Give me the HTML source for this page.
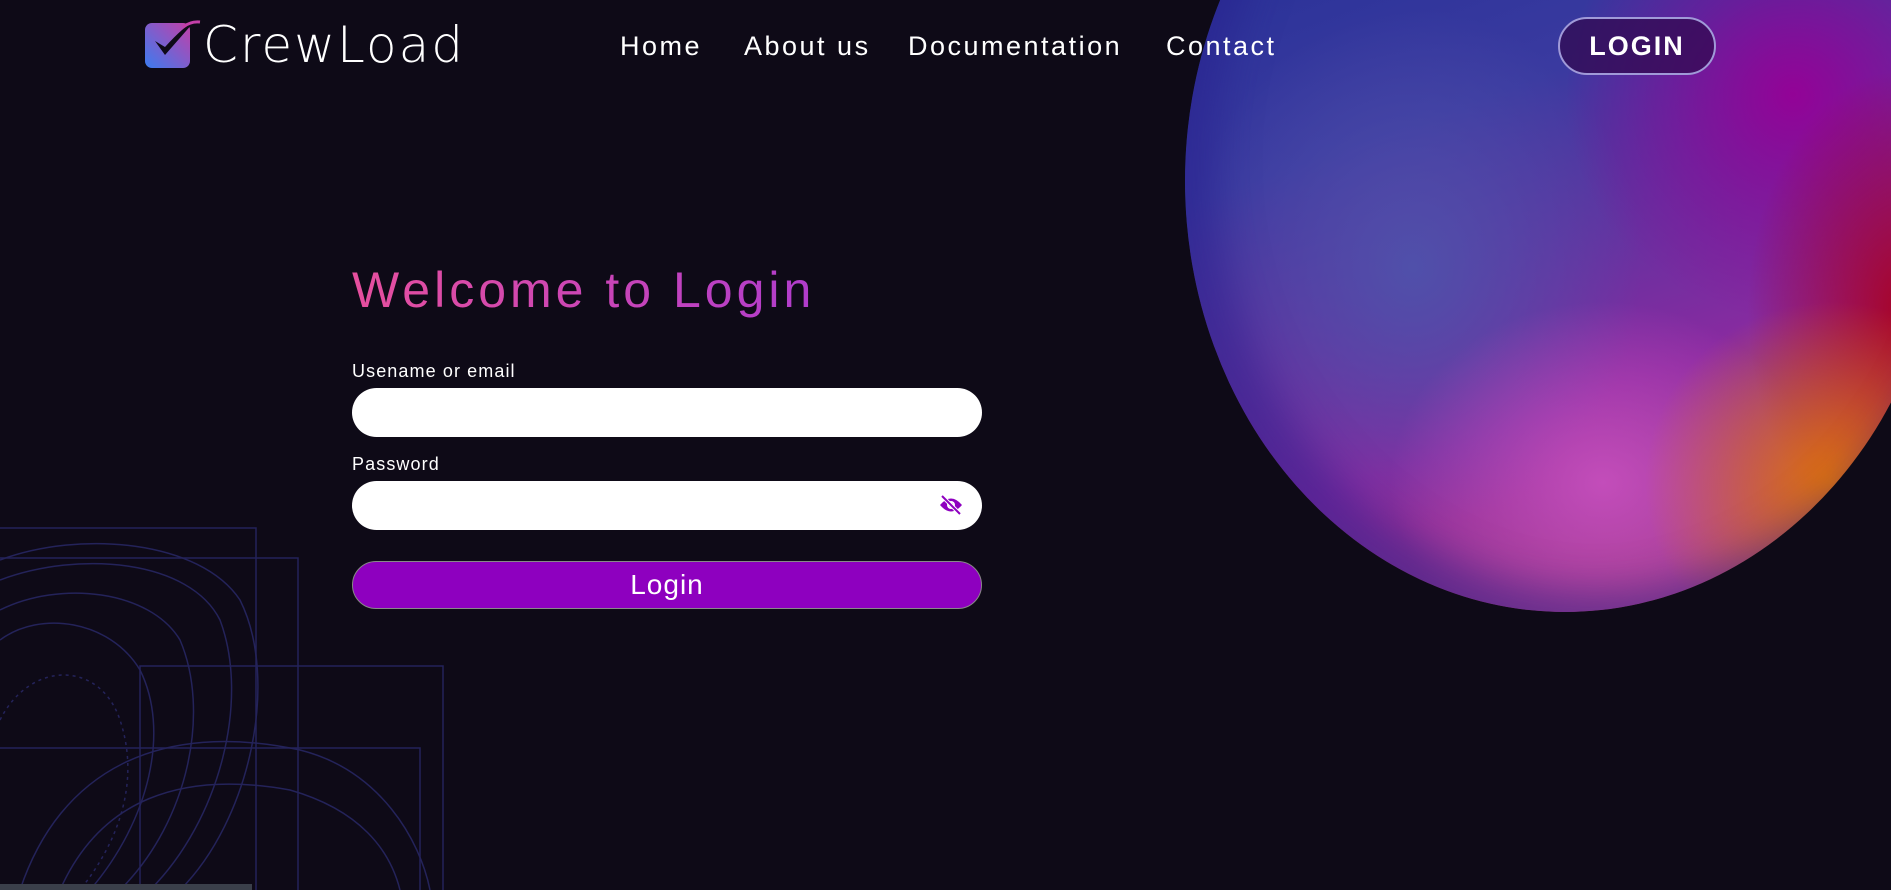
<!DOCTYPE html>
<html><head><meta charset="utf-8"><style>
*{margin:0;padding:0;box-sizing:border-box}
html,body{width:1891px;height:890px;overflow:hidden}
body{background:#0e0a17;position:relative;font-family:"Liberation Sans",sans-serif;color:#fff}
.sphere{position:absolute;left:1185px;top:-250px;width:760px;height:862px;border-radius:50%;overflow:hidden;
background:
radial-gradient(ellipse 35% 30% at 85% 85%,rgba(230,120,0,.9),rgba(230,120,0,0) 70%),
radial-gradient(ellipse 30% 40% at 95% 65%,rgba(170,0,30,.95),rgba(170,0,30,0) 70%),
radial-gradient(ellipse 40% 30% at 55% 85%,rgba(200,80,190,.9),rgba(200,80,190,0) 70%),
radial-gradient(ellipse 40% 35% at 80% 40%,rgba(150,0,150,.95),rgba(150,0,150,0) 75%),
radial-gradient(ellipse 40% 40% at 30% 60%,rgba(80,80,170,1),rgba(80,80,170,0) 75%),
linear-gradient(160deg,#1a2a90 0%,#3a3aa0 40%,#8a2aa0 70%,#b04a70 100%)}
.sphere::after{content:"";position:absolute;inset:0;border-radius:50%;box-shadow:inset 30px -20px 40px rgba(40,30,140,.5)}
.logo{position:absolute;left:145px;top:23px;width:45px;height:45px;border-radius:7px;background:linear-gradient(45deg,#3b7cf0,#c33fa8)}
.brand{position:absolute;left:203px;top:16px;font-size:50px;font-family:"DejaVu Sans",sans-serif;font-weight:200;letter-spacing:2px;color:#fff}
.nav a{position:absolute;top:31px;font-size:27px;color:#fff;text-decoration:none;letter-spacing:2.5px}
.btn-top{position:absolute;left:1558px;top:17px;width:158px;height:58px;border:2px solid #a09ad8;border-radius:29px;background:rgba(50,10,80,.75);font-weight:bold;font-size:27px;letter-spacing:2px;text-align:center;line-height:54px}
h1{position:absolute;left:352px;top:261px;font-size:50px;font-weight:normal;letter-spacing:4px;background:linear-gradient(90deg,#e64f9e,#b03ccc);-webkit-background-clip:text;color:transparent}
.lbl{position:absolute;left:352px;font-size:18px;letter-spacing:1.1px}
.inp{position:absolute;left:352px;width:630px;height:49px;background:#fff;border-radius:25px}
.go{position:absolute;left:352px;top:561px;width:630px;height:48px;background:#8e00bf;border:1px solid #888;border-radius:24px;text-align:center;font-size:28px;line-height:46px;letter-spacing:1px}
</style></head><body>
<div class="sphere"></div>
<svg style="position:absolute;left:0;top:520px" width="460" height="370" viewBox="0 0 460 370" fill="none" stroke="#24235a" stroke-width="1.5">
<rect x="-10" y="8" width="266" height="400"/><rect x="-10" y="38" width="308" height="400"/><rect x="140" y="146" width="303" height="300"/><rect x="-10" y="228" width="430" height="200"/>
<path d="M0 40 C80 10 200 20 240 80 C280 160 250 300 180 370"/><path d="M0 60 C80 30 190 40 220 100 C250 180 220 300 150 370"/>
<path d="M0 90 C60 60 150 70 180 120 C210 190 190 300 120 370"/><path d="M0 120 C40 90 110 100 140 150 C170 210 150 300 90 370"/>
<path d="M20 370 C60 250 160 200 300 230 C380 250 420 320 430 370"/><path d="M60 370 C100 280 180 250 290 270 C360 290 390 330 400 370"/>
<path d="M0 200 C30 140 100 140 120 200 C140 260 120 320 80 370" stroke-dasharray="3 4"/>
</svg>
<div style="position:absolute;left:0;top:884px;width:252px;height:6px;background:#3a3f4a"></div>
<div class="logo"><svg width="56" height="45" viewBox="0 0 56 45" style="position:absolute;left:0;top:-6px"><path d="M10 24 L20 38 L48 6 Q40 8 20 30 Z" fill="#0e0a17"/><path d="M38 10 Q46 4 55 5" stroke="#c33fa8" stroke-width="3" fill="none"/></svg></div>
<div class="brand">CrewLoad</div>
<div class="nav"><a style="left:620px">Home</a><a style="left:744px">About us</a><a style="left:908px">Documentation</a><a style="left:1166px">Contact</a></div>
<div class="btn-top">LOGIN</div>
<h1>Welcome to Login</h1>
<div class="lbl" style="top:361px">Usename or email</div>
<div class="inp" style="top:388px"></div>
<div class="lbl" style="top:454px">Password</div>
<div class="inp" style="top:481px"><svg style="position:absolute;right:18px;top:13px" width="26" height="22" viewBox="0 0 26 22"><path d="M2 11 Q13 -2 24 11 Q13 24 2 11Z" fill="#8e00bf"/><circle cx="13" cy="11" r="4" fill="#fff"/><circle cx="13" cy="11" r="2" fill="#8e00bf"/><path d="M4 2 L22 20" stroke="#fff" stroke-width="4"/><path d="M4 2 L22 20" stroke="#8e00bf" stroke-width="2"/></svg></div>
<div class="go">Login</div>
</body></html>
